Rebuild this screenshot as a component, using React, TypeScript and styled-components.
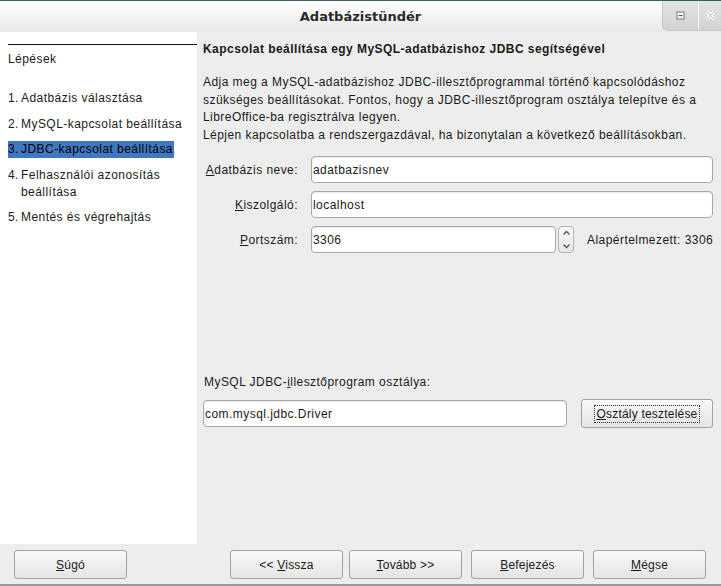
import React from "react";
import styled, { createGlobalStyle } from "styled-components";

const Global = createGlobalStyle`
  html, body { margin: 0; padding: 0; background: #ededed; }
  body { font-family: "Liberation Sans", Arial, sans-serif; font-size: 12px; color: #1a1a1a; letter-spacing: 0.45px; }
  * { box-sizing: border-box; }
`;

const Window = styled.div`
  width: 721px;
  height: 586px;
  display: flex;
  flex-direction: column;
  background: #ededed;
  border-top: 1px solid #3f5f66;
  border-bottom: 2px solid #9a9a9a;
  overflow: hidden;
`;

const TitleBar = styled.div`
  height: 31px;
  flex: none;
  display: flex;
  align-items: flex-start;
  background: linear-gradient(#ffffff, #f6f6f6 40%, #e9e9e9);
  position: relative;
`;

const Title = styled.div`
  flex: 1;
  text-align: center;
  padding-top: 8px;
  font-family: "DejaVu Sans", sans-serif;
  font-size: 13px;
  font-weight: bold;
  color: #2a2a2a;
  letter-spacing: 0;
`;

const WinButtons = styled.div`
  position: absolute;
  right: 0;
  top: 0;
  display: flex;
  height: 30px;
  border-bottom-left-radius: 5px;
  border-left: 1px solid #c9c9c9;
  border-bottom: 1px solid #c9c9c9;
  background: linear-gradient(#e4e4e4, #d2d2d2);
  overflow: hidden;
`;

const WinBtn = styled.div<{ $sep?: boolean }>`
  width: ${p => (p.$sep ? 36 : 22)}px;
  height: 100%;
  display: flex;
  align-items: center;
  justify-content: center;
  border-right: ${p => (p.$sep ? "1px solid #f4f4f4" : "none")};
`;

const Main = styled.div`
  flex: 1;
  display: flex;
  min-height: 0;
`;

const Sidebar = styled.div`
  width: 197px;
  flex: none;
  background: #ffffff;
  padding: 12px 0 0 8px;
  display: flex;
  flex-direction: column;
`;

const SideRule = styled.div`
  height: 1px;
  background: #111;
`;

const SideHeading = styled.div`
  margin-top: 5px;
  height: 18px;
  line-height: 18px;
`;

const Steps = styled.div`
  margin-top: 22px;
  display: flex;
  flex-direction: column;
  gap: 8.5px;
`;

const Step = styled.div<{ $active?: boolean }>`
  line-height: 17px;
  padding: 0 1px 0 0;
  align-self: flex-start;
  background: ${p => (p.$active ? "#3f78c2" : "transparent")};
  color: ${p => (p.$active ? "#000" : "#1a1a1a")};
  display: flex;
`;

const StepNum = styled.span`
  width: 13px;
  flex: none;
`;

const Content = styled.div`
  flex: 1;
  padding: 8px 8px 0 6px;
  display: flex;
  flex-direction: column;
`;

const Heading = styled.div`
  font-weight: bold;
  line-height: 18px;
`;

const Desc = styled.div`
  margin-top: 16px;
  line-height: 17.5px;
`;

const Form = styled.div`
  margin-top: 12px;
  display: grid;
  grid-template-columns: 108px 1fr;
  row-gap: 8px;
  align-items: center;
`;

const Label = styled.label`
  text-align: right;
  padding-right: 13px;
`;

const U = styled.span`
  text-decoration: underline;
`;

const Input = styled.div<{ $w?: number }>`
  height: 27px;
  ${p => (p.$w ? `width: ${p.$w}px;` : "")}
  background: #fff;
  border: 1px solid #a8a8a8;
  border-radius: 4px;
  box-shadow: inset 0 1px 1px rgba(0,0,0,0.08);
  display: flex;
  align-items: center;
  padding-left: 1px;
`;

const PortRow = styled.div`
  display: flex;
  align-items: center;
`;

const Spinner = styled.div`
  width: 16px;
  height: 27px;
  margin-left: 2px;
  border: 1px solid #b3b3b3;
  border-radius: 4px;
  background: linear-gradient(#fafafa, #e6e6e6);
  display: flex;
  flex-direction: column;
  align-items: center;
  justify-content: space-around;
`;

const DefaultNote = styled.span`
  margin-left: 13px;
  white-space: nowrap;
`;

const Spacer = styled.div`
  flex: 1;
`;

const ClassLabel = styled.div`
  line-height: 17px;
  margin-left: 1px;
`;

const ClassRow = styled.div`
  margin-top: 8px;
  display: flex;
  align-items: center;
  gap: 14px;
  margin-bottom: 116px;
`;

const Button = styled.div<{ $w?: number; $focus?: boolean; $ml?: number }>`
  width: ${p => p.$w ?? 113}px;
  height: 29px;
  margin-left: ${p => p.$ml ?? 0}px;
  border: 1px solid #a3a3a3;
  border-radius: 3px;
  background: linear-gradient(#f9f9f9, #e4e4e4);
  display: flex;
  align-items: center;
  justify-content: center;
  color: #1a1a1a;
  letter-spacing: 0.2px;
  span.inner {
    padding: 1px 2px;
    outline: ${p => (p.$focus ? "1px dotted #333" : "none")};
  }
`;

const Footer = styled.div`
  height: 40px;
  flex: none;
  display: flex;
  align-items: flex-start;
  padding: 6px 0 0 14px;
`;

const FooterGroup = styled.div`
  margin-left: 103px;
  display: flex;
`;

const Arrow = ({ down }: { down?: boolean }) => (
  <svg width="9" height="6" viewBox="0 0 9 6">
    <path
      d={down ? "M1.5 1.5 L4.5 4.5 L7.5 1.5" : "M1.5 4.5 L4.5 1.5 L7.5 4.5"}
      fill="none"
      stroke="#555"
      strokeWidth="1.3"
    />
  </svg>
);

export default function App() {
  return (
    <>
      <Global />
      <Window>
        <TitleBar>
          <Title>Adatbázistündér</Title>
          <WinButtons>
            <WinBtn $sep>
              <svg width="9" height="9" viewBox="0 0 9 9">
                <rect x="1" y="1" width="7" height="7" fill="#fff" stroke="#777" />
                <rect x="2.5" y="4" width="4" height="1.2" fill="#555" />
              </svg>
            </WinBtn>
            <WinBtn>
              <svg width="11" height="11" viewBox="0 0 11 11">
                <path d="M2 2 L9 9 M9 2 L2 9" stroke="#fff" strokeWidth="3" />
                <path d="M2 2 L9 9 M9 2 L2 9" stroke="#bdbdbd" strokeWidth="1" />
              </svg>
            </WinBtn>
          </WinButtons>
        </TitleBar>
        <Main>
          <Sidebar>
            <SideRule />
            <SideHeading>Lépések</SideHeading>
            <Steps>
              <Step><StepNum>1.</StepNum>Adatbázis választása</Step>
              <Step><StepNum>2.</StepNum>MySQL-kapcsolat beállítása</Step>
              <Step $active><StepNum>3.</StepNum>JDBC-kapcsolat beállítása</Step>
              <Step><StepNum>4.</StepNum><span>Felhasználói azonosítás<br />beállítása</span></Step>
              <Step><StepNum>5.</StepNum>Mentés és végrehajtás</Step>
            </Steps>
          </Sidebar>
          <Content>
            <Heading>Kapcsolat beállítása egy MySQL-adatbázishoz JDBC segítségével</Heading>
            <Desc>
              Adja meg a MySQL-adatbázishoz JDBC-illesztőprogrammal történő kapcsolódáshoz
              szükséges beállításokat. Fontos, hogy a JDBC-illesztőprogram osztálya telepítve és a
              LibreOffice-ba regisztrálva legyen.
              <br />
              Lépjen kapcsolatba a rendszergazdával, ha bizonytalan a következő beállításokban.
            </Desc>
            <Form>
              <Label><U>A</U>datbázis neve:</Label>
              <Input>adatbazisnev</Input>
              <Label><U>K</U>iszolgáló:</Label>
              <Input>localhost</Input>
              <Label><U>P</U>ortszám:</Label>
              <PortRow>
                <Input $w={245}>3306</Input>
                <Spinner>
                  <Arrow />
                  <Arrow down />
                </Spinner>
                <DefaultNote>Alapértelmezett: 3306</DefaultNote>
              </PortRow>
            </Form>
            <Spacer />
            <ClassLabel>MySQL JDBC-<U>i</U>llesztőprogram osztálya:</ClassLabel>
            <ClassRow>
              <Input $w={364}>com.mysql.jdbc.Driver</Input>
              <Button $w={132} $focus>
                <span className="inner"><U>O</U>sztály tesztelése</span>
              </Button>
            </ClassRow>
          </Content>
        </Main>
        <Footer>
          <Button><span className="inner"><U>S</U>úgó</span></Button>
          <FooterGroup>
            <Button><span className="inner">&lt;&lt; <U>V</U>issza</span></Button>
            <Button $ml={6}><span className="inner"><U>T</U>ovább &gt;&gt;</span></Button>
            <Button $ml={9}><span className="inner"><U>B</U>efejezés</span></Button>
            <Button $ml={9}><span className="inner"><U>M</U>égse</span></Button>
          </FooterGroup>
        </Footer>
      </Window>
    </>
  );
}
